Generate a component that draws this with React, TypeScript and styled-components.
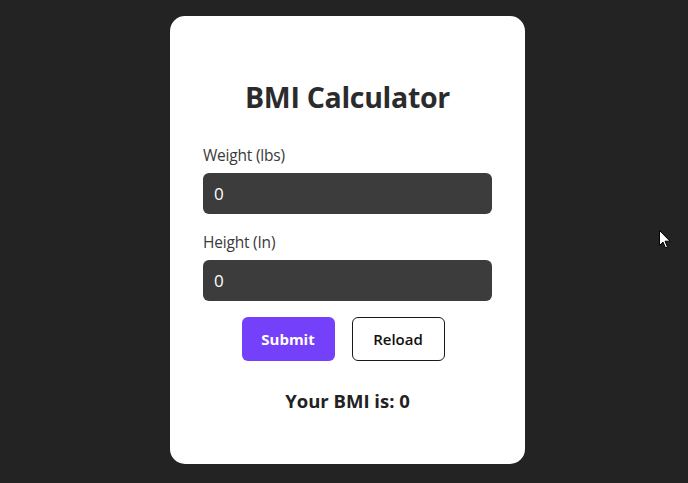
import React, {useState} from "react";
import styled, {createGlobalStyle} from "styled-components";

const GlobalStyle = createGlobalStyle`
  html, body {
    margin: 0;
    padding: 0;
    background: #232323;
    font-family: "Open Sans", "Noto Sans", sans-serif;
  }
`
const Page = styled.div`
  width: 688px;
  height: 483px;
  position: relative;
  display: flex;
  justify-content: center;
  align-items: flex-start;
  padding-top: 16px;
  padding-left: 7px;
  box-sizing: border-box;
`
const Card = styled.div`
  width: 355px;
  height: 448px;
  box-sizing: border-box;
  background: #fff;
  border-radius: 15px;
  padding: 0 33px;
  display: flex;
  flex-direction: column;
`
const Title = styled.h1`
  margin: 61px 0 0;
  height: 40px;
  line-height: 40px;
  font-size: 28.5px;
  font-weight: 700;
  color: #2b2b2b;
  text-align: center;
  letter-spacing: -0.3px;
`
const Field = styled.div`
  display: flex;
  flex-direction: column;
  margin-top: ${(props: {top: number}) => props.top}px;
`
const Label = styled.label`
  font-size: 15.5px;
  line-height: 20px;
  color: #3a3a3a;
  letter-spacing: -0.2px;
`
const Input = styled.input`
  margin-top: 8px;
  height: 41px;
  box-sizing: border-box;
  border: none;
  outline: none;
  border-radius: 6px;
  background: #3c3c3c;
  color: #fff;
  font-family: inherit;
  font-size: 17px;
  padding: 0 11px;
`
const Buttons = styled.div`
  display: flex;
  justify-content: center;
  gap: 17px;
  margin-top: 16px;
  padding-right: 9px;
`
const Button = styled.button`
  width: 93px;
  height: 44px;
  box-sizing: border-box;
  border-radius: 6px;
  font-family: inherit;
  font-size: 15px;
  font-weight: ${(props: {primary?: boolean}) => props.primary ? 700 : 600};
  color: ${(props: {primary?: boolean}) => props.primary ? '#fff' : '#111'};
  background: ${(props: {primary?: boolean}) => props.primary ? '#7540fa' : '#fff'};
  border: ${(props: {primary?: boolean}) => props.primary ? 'none' : '1px solid #1a1a1a'};
  cursor: pointer;
`
const Result = styled.div`
  margin-top: 28px;
  line-height: 24px;
  font-size: 18.5px;
  font-weight: 700;
  color: #222;
  text-align: center;
`
const Cursor = styled.svg`
  position: absolute;
  left: 659px;
  top: 230px;
`

const App = () => {
  const [weight, setWeight] = useState('0')
  const [height, setHeight] = useState('0')
  const [bmi, setBmi] = useState(0)
  const handleSubmit = () => {
    const w = parseFloat(weight)
    const h = parseFloat(height)
    if (w > 0 && h > 0) {
      setBmi(Math.round((w / (h * h)) * 703 * 10) / 10)
    }
  }
  const handleReload = () => {
    setWeight('0')
    setHeight('0')
    setBmi(0)
  }
  return (
    <Page>
      <GlobalStyle/>
      <Card>
        <Title>BMI Calculator</Title>
        <Field top={28}>
          <Label>Weight (lbs)</Label>
          <Input value={weight} onChange={e => setWeight(e.target.value)}/>
        </Field>
        <Field top={18}>
          <Label>Height (In)</Label>
          <Input value={height} onChange={e => setHeight(e.target.value)}/>
        </Field>
        <Buttons>
          <Button primary onClick={handleSubmit}>Submit</Button>
          <Button onClick={handleReload}>Reload</Button>
        </Buttons>
        <Result>Your BMI is: {bmi}</Result>
      </Card>
      <Cursor width="12" height="19" viewBox="0 0 12 19">
        <path d="M0.5 0.5 L0.5 15.5 L4 12 L6.5 18 L8.5 17 L6 11.2 L11 11.2 Z" fill="#fff" stroke="#000" strokeWidth="1"/>
      </Cursor>
    </Page>
  )
}

export default App
